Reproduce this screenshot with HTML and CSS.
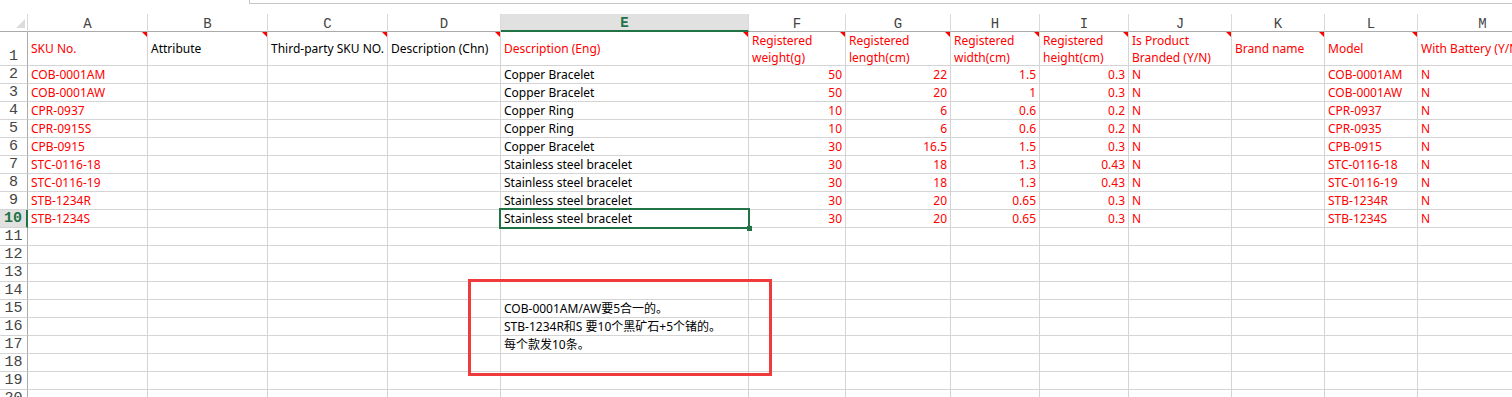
FILE: index.html
```html
<!DOCTYPE HTML>
<html>
<head>
<title>Sheet1</title>
<link rel="stylesheet" href="styles.css">
</head>

<body>
<div class="formulabar"></div>

<div class="sheet">
    <div id="grid" class="grid"></div>
    <div class="selection"><span class="handle"></span></div>
    <div class="shape"></div>
</div>

<script>
    var letters = "ABCDEFGHIJKLM".split("");

    var titles = [
        ["SKU No.", "red"],
        ["Attribute", ""],
        ["Third-party SKU NO.", ""],
        ["Description (Chn)", ""],
        ["Description (Eng)", "red"],
        ["Registered\nweight(g)", "red"],
        ["Registered\nlength(cm)", "red"],
        ["Registered\nwidth(cm)", "red"],
        ["Registered\nheight(cm)", "red"],
        ["Is Product\nBranded (Y/N)", "red"],
        ["Brand name", "red"],
        ["Model", "red"],
        ["With Battery (Y/N)", "red"]
    ];

    var items = [
        ["COB-0001AM", "Copper Bracelet", 50, 22, 1.5, 0.3, "COB-0001AM"],
        ["COB-0001AW", "Copper Bracelet", 50, 20, 1, 0.3, "COB-0001AW"],
        ["CPR-0937", "Copper Ring", 10, 6, 0.6, 0.2, "CPR-0937"],
        ["CPR-0915S", "Copper Ring", 10, 6, 0.6, 0.2, "CPR-0935"],
        ["CPB-0915", "Copper Bracelet", 30, 16.5, 1.5, 0.3, "CPB-0915"],
        ["STC-0116-18", "Stainless steel bracelet", 30, 18, 1.3, 0.43, "STC-0116-18"],
        ["STC-0116-19", "Stainless steel bracelet", 30, 18, 1.3, 0.43, "STC-0116-19"],
        ["STB-1234R", "Stainless steel bracelet", 30, 20, 0.65, 0.3, "STB-1234R"],
        ["STB-1234S", "Stainless steel bracelet", 30, 20, 0.65, 0.3, "STB-1234S"]
    ];

    var notes = {
        15: "COB-0001AM/AW要5合一的。",
        16: "STB-1234R和S 要10个黑矿石+5个锗的。",
        17: "每个款发10条。"
    };

    function cell(text, cls) {
        return "<div class=\"cell " + (cls || "") + "\">" + (text === undefined ? "" : text) + "</div>";
    }

    var html = cell("", "corner");
    for (var i = 0; i < letters.length; i++) {
        html += cell(letters[i], "colhead" + (letters[i] == "E" ? " selcol" : ""));
    }

    html += cell("1", "rowhead");
    for (var i = 0; i < titles.length; i++) {
        html += cell(titles[i][0], "title " + titles[i][1] + (i < 12 ? " tag" : ""));
    }

    for (var r = 2; r <= 20; r++) {
        html += cell(r, "rowhead" + (r == 10 ? " selrow" : ""));
        var it = items[r - 2];
        if (it) {
            html += cell(it[0], "red");
            html += cell() + cell() + cell();
            html += cell(it[1]);
            html += cell(it[2], "num red") + cell(it[3], "num red") + cell(it[4], "num red") + cell(it[5], "num red");
            html += cell("N", "red") + cell() + cell(it[6], "red") + cell("N", "red");
        } else {
            html += cell() + cell() + cell() + cell();
            html += cell(notes[r]);
            for (var c = 0; c < 8; c++) html += cell();
        }
    }

    document.getElementById("grid").innerHTML = html;
</script>
</body>
</html>
```

FILE: styles.css
```css
body {margin: 0; overflow: hidden; background: #fff; font-family: "Noto Sans", "Noto Sans CJK SC", sans-serif; font-size: 12px; color: #000;}

.formulabar {margin-left: 249px; height: 3px; border-left: 1px solid #c6c6c6; border-bottom: 1px solid #c6c6c6;}

.sheet {position: relative; margin-top: 10px;}
.grid {display: grid; grid-template-columns: 28px 120px 120px 120px 113px 248px 97px 105px 89px 89px 103px 93px 93px 130px; grid-template-rows: 18px 34px; grid-auto-rows: 18px;}

.cell {box-sizing: border-box; position: relative; display: flex; align-items: flex-end; padding: 0 3px; border-right: 1px solid #d4d4d4; border-bottom: 1px solid #d4d4d4; white-space: nowrap; line-height: 16px;}
.red {color: #f00;}
.num {justify-content: flex-end;}
.title {align-items: center; white-space: pre-line; line-height: 17px;}
.tag::after {content: ""; position: absolute; top: 0; right: 0; border-top: 5px solid #f00; border-left: 5px solid transparent;}

.corner {border-right-color: #dadada; border-bottom-color: #ababab;}
.corner::after {content: ""; position: absolute; right: 2px; bottom: 3px; border-bottom: 9px solid #dcdcdc; border-left: 9px solid transparent;}
.colhead {justify-content: center; align-items: center; padding: 2px 0 0; border-right-color: #dadada; border-bottom-color: #ababab; font-family: "Liberation Mono", monospace; font-size: 14px; color: #444;}
.rowhead {justify-content: center; padding: 0; border-right-color: #ababab; font-family: "Liberation Mono", monospace; font-size: 15px; color: #444;}
.selcol {background: #e1e1e1; border-bottom: 2px solid #217346; color: #217346; font-weight: bold;}
.selrow {background: #e1e1e1; border-right: 2px solid #217346; color: #217346; font-weight: bold;}

.selection {position: absolute; left: 499px; top: 194px; width: 251px; height: 21px; box-sizing: border-box; border: 2px solid #217346;}
.handle {position: absolute; right: -4px; bottom: -4px; width: 5px; height: 5px; background: #217346;}

.shape {position: absolute; left: 468px; top: 265px; width: 304px; height: 97px; box-sizing: border-box; border: 3px solid #ef3b3b;}
```
